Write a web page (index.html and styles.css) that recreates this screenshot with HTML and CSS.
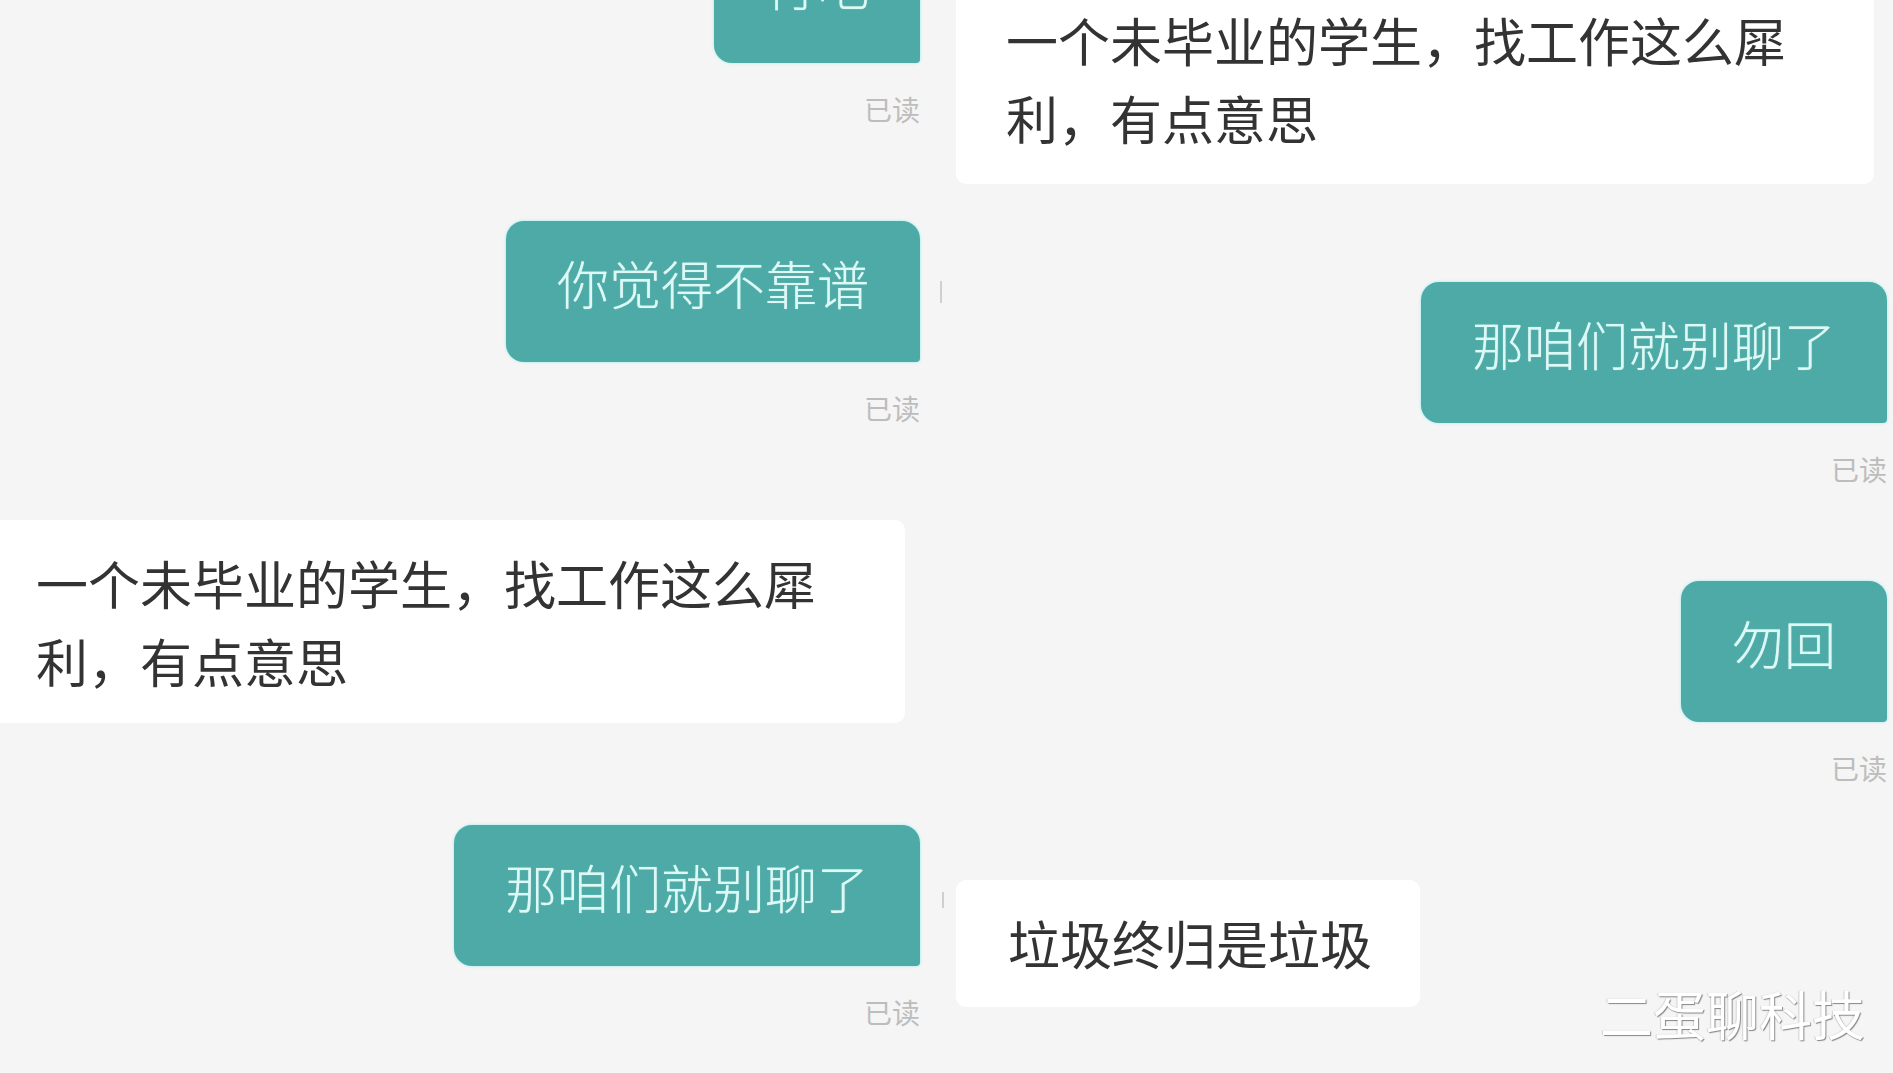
FILE: index.html
```html
<!DOCTYPE html>
<html lang="zh-CN">
<head>
    <meta charset="UTF-8">
    <meta name="viewport" content="width=device-width, initial-scale=1.0">
    <title>聊天记录</title>
    <link rel="stylesheet" href="styles.css">
</head>
<body>
  <main class="shots">
    <!-- 左边截图 -->
    <section class="chat chat-left">
      <div class="bubble mine first-mine">行吧</div>
      <span class="read">已读</span>

      <div class="bubble mine">你觉得不靠谱</div>
      <span class="read">已读</span>

      <div class="bubble theirs wide edge">一个未毕业的学生，找工作这么犀利，有点意思</div>

      <div class="bubble mine late">那咱们就别聊了</div>
      <span class="read">已读</span>
      <i class="caret caret-top"></i>
    </section>

    <!-- 右边截图 -->
    <section class="chat chat-right">
      <div class="bubble theirs wide first-theirs">一个未毕业的学生，找工作这么犀利，有点意思</div>

      <div class="bubble mine">那咱们就别聊了</div>
      <span class="read">已读</span>

      <div class="bubble mine">勿回</div>
      <span class="read">已读</span>

      <div class="bubble theirs short">垃圾终归是垃圾</div>
      <i class="caret caret-bottom"></i>
    </section>
  </main>

  <div class="watermark">二蛋聊科技</div>
</body>
</html>
```

FILE: styles.css
```css
html,
body {
    margin: 0;
    height: 100%;
    overflow: hidden;
}

body {
    background: #f5f5f5;
    font-family: "Noto Sans CJK SC", "Noto Sans", sans-serif;
    position: relative;
}

.shots {
    display: flex;
    height: 100%;
}

.chat {
    position: relative;
    display: flex;
    flex-direction: column;
    align-items: flex-end;
    box-sizing: border-box;
}

.chat-left {
    width: 942px;
    padding-right: 22px;
}

.chat-right {
    flex: 1;
    padding-left: 14px;
    padding-right: 6px;
}

.bubble {
    box-sizing: border-box;
    font-size: 52px;
    margin-top: 98px;
}

.mine {
    background: #4daaa6;
    color: #ddf8f5;
    font-weight: 300;
    line-height: 52px;
    padding: 36px 51px 53px;
    border-radius: 18px 18px 4px 18px;
    box-shadow: 0 0 2px 1px rgba(160, 240, 240, 0.6);
    text-shadow: 0 0 1px rgba(220, 255, 255, 0.7);
}

.theirs {
    background: #fff;
    color: #333;
    border-radius: 10px;
    align-self: flex-start;
}

.wide {
    width: 918px;
    line-height: 78px;
    padding: 24px 60px 23px 50px;
}

.edge {
    width: 905px;
    padding-left: 36px;
    border-radius: 0 10px 10px 0;
}

.short {
    line-height: 52px;
    padding: 37px 48px 38px 52px;
}

.first-mine {
    margin-top: -78px;
}

.first-theirs {
    margin-top: -19px;
    padding-top: 20px;
    padding-bottom: 27px;
}

.late {
    margin-top: 102px;
}

.read {
    margin-top: 32px;
    font-size: 28px;
    line-height: 28px;
    color: #bdbdbd;
}

.caret {
    position: absolute;
    width: 2px;
    background: #cfcfcf;
}

.caret-top {
    right: 0;
    top: 281px;
    height: 22px;
}

.caret-bottom {
    left: 0;
    top: 892px;
    height: 16px;
}

.watermark {
    position: absolute;
    right: 28px;
    bottom: 30px;
    font-size: 53px;
    line-height: 60px;
    color: #fff;
    text-shadow: 1px 1px 1px rgba(0, 0, 0, 0.45), -1px 0 1px rgba(0, 0, 0, 0.15);
}
```
